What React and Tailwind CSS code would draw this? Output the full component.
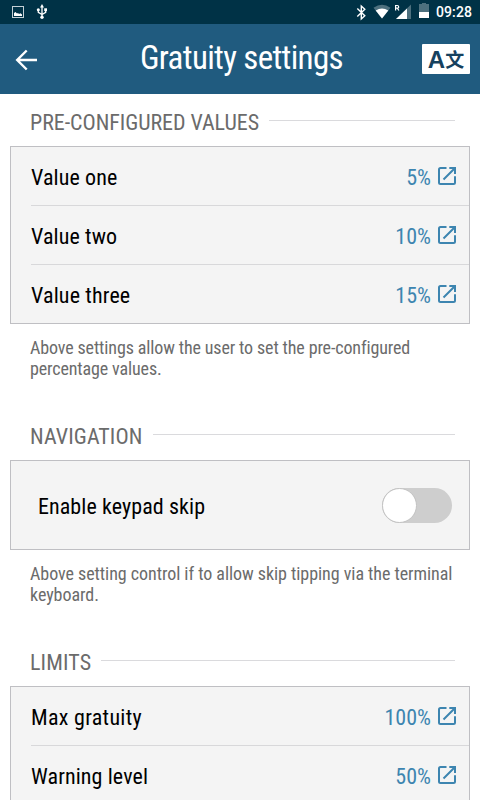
import React from "react";

function OpenIcon() {
  return (
    <svg className="ml-1.5 mr-3 block h-5 w-5 shrink-0" viewBox="0 0 20 20" fill="none" stroke="#3d85b0" strokeWidth="2">
      <path d="M9.500 2H3.500Q2 2 2 3.500V16.500Q2 18 3.500 18H16.500Q18 18 18 16.500V10.200" />
      <path d="M12.300 2H18V8M17.500 2.500L6.500 13.500" />
    </svg>
  );
}

function Heading({ children, spacing }) {
  return (
    <div className="flex h-[52px] items-center pl-[30px] pr-[25px] pt-1 text-[22px] leading-6 text-[#6b6b6b]">
      <span className={`mt-[2px] whitespace-nowrap ${spacing}`}>{children}</span>
      <span className="-mt-[3px] ml-[10px] h-px flex-1 bg-[#dadadd]" />
    </div>
  );
}

function Row({ label, value, last, spacing = "tracking-[0.1px]" }) {
  return (
    <div className="pl-5">
      <div className={last ? "flex h-[58px] items-center" : "flex h-[59px] items-center border-b border-[#d8d8da]"}>
        <span className={`flex-1 pt-1 text-[22px] leading-6 text-black ${spacing}`}>{label}</span>
        <span className="pt-1 text-[22px] leading-6 text-[#3d85b0]">{value}</span>
        <OpenIcon />
      </div>
    </div>
  );
}

function Card({ children }) {
  return <div className="mx-[10px] border border-[#bfbfc3] bg-[#f4f4f4]">{children}</div>;
}

function Caption({ children, spacing }) {
  return (
    <p className={`h-[84px] pl-[30px] pr-4 pt-[13px] text-[18px] leading-[21px] text-[#6b6b6b] ${spacing}`}>{children}</p>
  );
}

function StatusBar() {
  return (
    <div className="flex h-6 items-center bg-[#003246]">
      <svg className="block h-6 w-[60px]" viewBox="0 0 60 24" fill="none">
        <rect x="12.500" y="6.500" width="11" height="11" stroke="#c3cfd5" />
        <path d="M14 16V13L15.500 12L17 13.500L18 13L19 14L20.500 13.300L22 14.500V16Z" fill="#fff" />
        <path d="M42 6V17M38.300 9V12.300L42 14.500L45.700 12.300V9" stroke="#fff" strokeWidth="1.300" />
        <path d="M42 4L44 7.500H40Z" fill="#fff" />
        <circle cx="38.300" cy="9.800" r="1.500" fill="#fff" />
        <rect x="44.200" y="8.300" width="2.800" height="2.800" fill="#fff" />
        <circle cx="42" cy="17.300" r="1.700" fill="#fff" />
      </svg>
      <svg className="ml-auto block h-6 w-[80px]" viewBox="352 0 80 24" fill="none">
        <path d="M357.300 8.500L364.800 15.800L361.300 19V6L364.800 9.200L357.300 16.500" stroke="#fff" strokeWidth="1.400" />
        <path d="M373.500 7.800Q382 1.500 390.500 7.800L382 18.500Z" fill="#4d707e" />
        <path d="M375.700 10.500Q382 6.500 388.300 10.500L382 18.500Z" fill="#fff" />
        <path d="M396 19L411 4.500V19Z" fill="#4d707e" />
        <path d="M396 19L407 8.500V19Z" fill="#fff" />
        <path d="M395.600 10.500V5.500H397.300Q398.700 5.500 398.700 6.900T397.300 8.200H395.600M397.300 8.200L398.900 10.500" stroke="#fff" strokeWidth="1.200" />
        <path d="M419 4H422V3H426V4H429V12H419Z" fill="#4d707e" />
        <path d="M419 12H429V18H419Z" fill="#fff" />
      </svg>
      <span className="ml-[4px] w-[44px] whitespace-nowrap font-[Roboto] text-[14px] font-medium leading-6 tracking-[0.1px] text-white [font-stretch:100%]">09:28</span>
    </div>
  );
}

function Header() {
  return (
    <header className="flex h-[70px] items-center bg-[#205b7f]">
      <svg className="ml-[15px] mt-[2px] block h-[22px] w-[23px]" viewBox="0 0 23 22" fill="none" stroke="#fff" strokeWidth="2.400">
        <path d="M22 11H2.500M11.700 1.500L2.200 11L11.700 20.500" />
      </svg>
      <h1 className="mb-[2px] ml-[23px] flex-1 text-center text-[33px] leading-[38px] tracking-[-0.65px] text-white">Gratuity settings</h1>
      <div className="mr-[10px] flex h-[30px] w-12 items-center justify-center rounded-[1px] bg-white text-[#16415e]">
        <span className="mt-px font-['Liberation_Sans'] text-[24px] font-bold leading-[30px]">A</span>
        <span className="font-['Noto_Sans_CJK_SC',sans-serif] text-[19px] font-bold leading-[30px]">文</span>
      </div>
    </header>
  );
}

export default function App() {
  return (
    <div className="h-[800px] w-[480px] overflow-hidden bg-white font-['Roboto_Condensed',Roboto,sans-serif] [font-stretch:75%]">
      <StatusBar />
      <Header />
      <Heading spacing="tracking-[-0.05px]">PRE-CONFIGURED VALUES</Heading>
      <Card>
        <Row label="Value one" value="5%" />
        <Row label="Value two" value="10%" />
        <Row label="Value three" value="15%" spacing="tracking-[0.15px]" last />
      </Card>
      <Caption spacing="tracking-[-0.13px]">Above settings allow the user to set the pre-configured percentage values.</Caption>
      <Heading spacing="tracking-[0.1px]">NAVIGATION</Heading>
      <Card>
        <div className="flex h-[88px] items-center justify-between pl-[27px] pr-[17px]">
          <span className="pt-1 text-[22px] leading-6 tracking-[0.08px] text-black">Enable keypad skip</span>
          <div className="h-[35px] w-[70px] rounded-full bg-[#cecece]">
            <div className="h-[35px] w-[35px] rounded-full border border-[#c2c2c2] bg-white" />
          </div>
        </div>
      </Card>
      <Caption spacing="tracking-[-0.05px]">Above setting control if to allow skip tipping via the terminal keyboard.</Caption>
      <Heading spacing="tracking-[0.15px]">LIMITS</Heading>
      <Card>
        <Row label="Max gratuity" value="100%" spacing="tracking-[0.3px]" />
        <Row label="Warning level" value="50%" />
      </Card>
    </div>
  );
}
